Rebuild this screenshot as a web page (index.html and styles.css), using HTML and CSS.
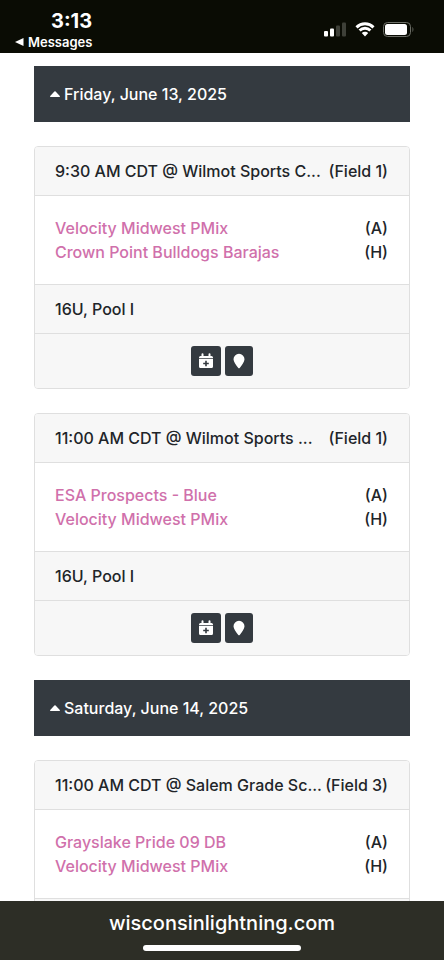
FILE: index.html
```html
<!DOCTYPE html>
<html lang="en">
<head>
    <meta charset="utf-8">
    <meta name="viewport" content="width=device-width, initial-scale=1">
    <title>Wisconsin Lightning Schedule</title>
    <link rel="stylesheet" href="styles.css">
</head>
<body>
    <svg class="sprite" width="0" height="0" aria-hidden="true">
        <symbol id="icon-calendar" viewBox="0 0 14 16">
            <path fill-rule="evenodd" d="M2.500 1.200a1 1 0 0 1 2 0V3h5V1.200a1 1 0 0 1 2 0V3h1A1.500 1.500 0 0 1 14 4.500V5.200H0V4.500A1.500 1.500 0 0 1 1.500 3h1zM0 6h14v7.500a1.500 1.500 0 0 1-1.500 1.500h-11A1.500 1.500 0 0 1 0 13.500zM6.200 7.700v2H4.200v1.600h2v2h1.600v-2h2V9.700h-2v-2z"/>
        </symbol>
        <symbol id="icon-marker" viewBox="0 0 12 16">
            <path d="M6 .8a5.500 5.500 0 0 1 5.500 5.500c0 2.500-2.700 5.900-4.600 8.400a1.100 1.100 0 0 1-1.800 0C3.200 12.200.5 8.800.5 6.300A5.500 5.500 0 0 1 6 .8z"/>
        </symbol>
        <symbol id="icon-caret" viewBox="0 0 10 6">
            <path d="M.6 6h8.800c.6 0 .8-.6.4-1L5.600.5a.8.8 0 0 0-1.200 0L.2 5c-.4.400-.2 1 .4 1z"/>
        </symbol>
    </svg>

    <header class="status-bar">
        <div class="status-left">
            <span class="clock">3:13</span>
            <a class="back-link" href="#">
                <svg width="9" height="8" viewBox="0 0 9 8" aria-hidden="true"><path d="M0 4 8.500 0v8z"/></svg>
                Messages
            </a>
        </div>
        <div class="status-icons">
            <svg width="23" height="15" viewBox="0 0 23 15" aria-hidden="true">
                <rect x="0" y="9" width="4" height="5.500" rx="1"/>
                <rect x="6" y="6.500" width="4" height="8" rx="1"/>
                <rect class="dim" x="12" y="3.500" width="4" height="11" rx="1"/>
                <rect class="dim" x="18" y="0.500" width="4" height="14" rx="1"/>
            </svg>
            <svg width="20" height="15" viewBox="0 0 20 15" aria-hidden="true">
                <path class="wave" d="M1.500 5.300a12.200 12.200 0 0 1 17 0M4.600 8.500a7.800 7.800 0 0 1 10.800 0"/>
                <path d="M10 9.800c1.300 0 2.400.5 3.200 1.300L10 14.500l-3.200-3.400A4.500 4.500 0 0 1 10 9.800z"/>
            </svg>
            <svg width="31" height="15" viewBox="0 0 31 15" aria-hidden="true">
                <rect class="shell" x="0.500" y="0.500" width="27" height="14" rx="4"/>
                <rect x="2" y="2" width="22" height="11" rx="2.500"/>
                <path class="dim" d="M29 5c1 .3 1.700 1.300 1.700 2.500S30 9.700 29 10z"/>
            </svg>
        </div>
    </header>

    <main class="schedule">
        <button class="date-banner" type="button" aria-expanded="true">
            <svg width="10" height="6" aria-hidden="true"><use href="#icon-caret"/></svg>
            Friday, June 13, 2025
        </button>

        <section class="card">
            <div class="card-header">
                <span class="venue">9:30 AM CDT @ Wilmot Sports C...</span>
                <span>(Field 1)</span>
            </div>
            <div class="card-body">
                <div class="team"><a href="#">Velocity Midwest PMix</a><span>(A)</span></div>
                <div class="team"><a href="#">Crown Point Bulldogs Barajas</a><span>(H)</span></div>
            </div>
            <div class="card-footer">16U, Pool I</div>
            <div class="card-footer actions">
                <button class="btn" type="button" aria-label="Add to calendar"><svg width="14" height="16"><use href="#icon-calendar"/></svg></button>
                <button class="btn" type="button" aria-label="Map"><svg width="12" height="16"><use href="#icon-marker"/></svg></button>
            </div>
        </section>

        <section class="card">
            <div class="card-header">
                <span class="venue">11:00 AM CDT @ Wilmot Sports ...</span>
                <span>(Field 1)</span>
            </div>
            <div class="card-body">
                <div class="team"><a href="#">ESA Prospects - Blue</a><span>(A)</span></div>
                <div class="team"><a href="#">Velocity Midwest PMix</a><span>(H)</span></div>
            </div>
            <div class="card-footer">16U, Pool I</div>
            <div class="card-footer actions">
                <button class="btn" type="button" aria-label="Add to calendar"><svg width="14" height="16"><use href="#icon-calendar"/></svg></button>
                <button class="btn" type="button" aria-label="Map"><svg width="12" height="16"><use href="#icon-marker"/></svg></button>
            </div>
        </section>

        <button class="date-banner" type="button" aria-expanded="true">
            <svg width="10" height="6" aria-hidden="true"><use href="#icon-caret"/></svg>
            Saturday, June 14, 2025
        </button>

        <section class="card">
            <div class="card-header">
                <span class="venue">11:00 AM CDT @ Salem Grade Sc...</span>
                <span>(Field 3)</span>
            </div>
            <div class="card-body">
                <div class="team"><a href="#">Grayslake Pride 09 DB</a><span>(A)</span></div>
                <div class="team"><a href="#">Velocity Midwest PMix</a><span>(H)</span></div>
            </div>
            <div class="card-footer"></div>
        </section>
    </main>

    <footer class="address-bar">
        <span>wisconsinlightning.com</span>
        <div class="home-indicator"></div>
    </footer>
</body>
</html>
```
FILE: styles.css
```css
* {
    box-sizing: border-box;
}
body {
    display: flex;
    flex-direction: column;
    height: 100vh;
    margin: 0;
    background: #fff;
    color: #212529;
    font-family: Inter, "Liberation Sans", sans-serif;
    font-size: 16px;
    font-weight: 500;
    line-height: 24px;
}
a {
    color: #d070ab;
    text-decoration: none;
}
svg {
    display: block;
    flex-shrink: 0;
    fill: currentColor;
}
.sprite {
    position: absolute;
}

/* phone status bar */
.status-bar {
    display: flex;
    justify-content: space-between;
    flex-shrink: 0;
    height: 53px;
    padding: 10px 30px 0 15px;
    background: #0a0c04;
    color: #fff;
}
.status-left {
    display: flex;
    flex-direction: column;
}
.clock {
    padding-left: 36px;
    font-size: 20px;
    font-weight: 700;
    line-height: 22px;
}
.back-link {
    display: flex;
    align-items: center;
    gap: 4px;
    color: #fff;
    font-size: 13px;
    font-weight: 600;
    line-height: 20px;
}
.status-icons {
    display: flex;
    gap: 8px;
    padding-top: 12px;
}
.dim {
    fill: #3e4038;
}
.shell {
    fill: none;
    stroke: #6c6e66;
}
.wave {
    fill: none;
    stroke: currentColor;
    stroke-width: 3;
}

.schedule {
    flex: 1;
    min-height: 0;
    overflow: hidden;
    padding: 13px 34px 0;
}
.date-banner {
    display: flex;
    align-items: center;
    gap: 4px;
    width: 100%;
    margin-bottom: 24px;
    padding: 16px;
    border: none;
    background: #343a40;
    color: #fff;
    font: inherit;
    text-align: left;
}
.card {
    margin-bottom: 24px;
    border: 1px solid #dfdfdf;
    border-radius: 4px;
    overflow: hidden;
}
.card-header,
.card-footer {
    min-height: 49px;
    padding: 12px 21px 12px 20px;
    background: #f7f7f7;
}
.card-header {
    display: flex;
    justify-content: space-between;
    border-bottom: 1px solid #dfdfdf;
    white-space: nowrap;
}
.venue {
    overflow: hidden;
}
.card-body {
    padding: 20px 21px 20px 20px;
}
.team {
    display: flex;
    justify-content: space-between;
}
.card-footer {
    border-top: 1px solid #dfdfdf;
}
.actions {
    display: flex;
    justify-content: center;
    gap: 4px;
}
.btn {
    padding: 7px 8px;
    border: none;
    border-radius: 3px;
    background: #343a40;
    color: #fff;
}

/* browser address bar */
.address-bar {
    display: flex;
    flex-direction: column;
    align-items: center;
    flex-shrink: 0;
    gap: 10px;
    padding: 10px 0 9px;
    background: #2d2e26;
    color: #fff;
    font-size: 20px;
}
.home-indicator {
    width: 158px;
    height: 6px;
    border-radius: 3px;
    background: #fff;
}
```
